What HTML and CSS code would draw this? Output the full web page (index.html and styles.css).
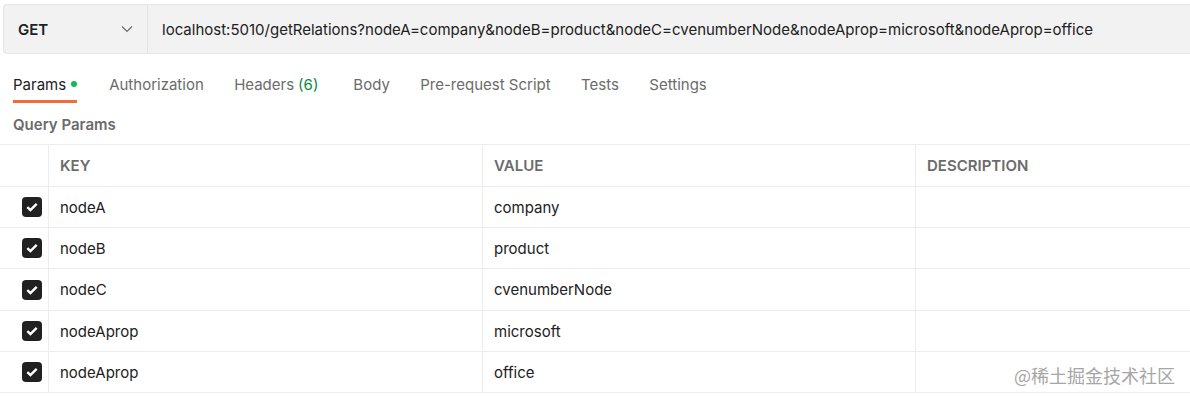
FILE: index.html
```html
<!DOCTYPE html>
<html>
<head>
<meta charset="utf-8">
<link rel="stylesheet" href="styles.css">
</head>
<body>
<div class="page">
  <div class="urlbar">
    <div class="method">
      <span class="method-name">GET</span>
      <svg class="chev" width="12" height="8" viewBox="0 0 12 8"><path d="M1 1.5 L6 6.5 L11 1.5" fill="none" stroke="#6b6b6b" stroke-width="1.2"/></svg>
    </div>
    <div class="url">localhost:5010/getRelations?nodeA=company&amp;nodeB=product&amp;nodeC=cvenumberNode&amp;nodeAprop=microsoft&amp;nodeAprop=office</div>
  </div>
  <div class="tabs">
    <div class="tab active">Params <span class="dot"></span></div>
    <div class="tab">Authorization</div>
    <div class="tab wide">Headers <span class="count">(6)</span></div>
    <div class="tab">Body</div>
    <div class="tab">Pre-request Script</div>
    <div class="tab">Tests</div>
    <div class="tab">Settings</div>
  </div>
  <div class="section-title">Query Params</div>
  <div class="table">
    <div class="row head">
      <div class="cell chk"></div>
      <div class="cell key">KEY</div>
      <div class="cell val">VALUE</div>
      <div class="cell desc">DESCRIPTION</div>
    </div>
    <div class="row">
      <div class="cell chk"><span class="box"><svg width="12" height="10" viewBox="0 0 12 10"><path d="M1.3 5.2 L4.4 8 L10.7 1.8" fill="none" stroke="#fff" stroke-width="2.4"/></svg></span></div>
      <div class="cell key">nodeA</div>
      <div class="cell val">company</div>
      <div class="cell desc"></div>
    </div>
    <div class="row">
      <div class="cell chk"><span class="box"><svg width="12" height="10" viewBox="0 0 12 10"><path d="M1.3 5.2 L4.4 8 L10.7 1.8" fill="none" stroke="#fff" stroke-width="2.4"/></svg></span></div>
      <div class="cell key">nodeB</div>
      <div class="cell val">product</div>
      <div class="cell desc"></div>
    </div>
    <div class="row">
      <div class="cell chk"><span class="box"><svg width="12" height="10" viewBox="0 0 12 10"><path d="M1.3 5.2 L4.4 8 L10.7 1.8" fill="none" stroke="#fff" stroke-width="2.4"/></svg></span></div>
      <div class="cell key">nodeC</div>
      <div class="cell val">cvenumberNode</div>
      <div class="cell desc"></div>
    </div>
    <div class="row">
      <div class="cell chk"><span class="box"><svg width="12" height="10" viewBox="0 0 12 10"><path d="M1.3 5.2 L4.4 8 L10.7 1.8" fill="none" stroke="#fff" stroke-width="2.4"/></svg></span></div>
      <div class="cell key">nodeAprop</div>
      <div class="cell val">microsoft</div>
      <div class="cell desc"></div>
    </div>
    <div class="row">
      <div class="cell chk"><span class="box"><svg width="12" height="10" viewBox="0 0 12 10"><path d="M1.3 5.2 L4.4 8 L10.7 1.8" fill="none" stroke="#fff" stroke-width="2.4"/></svg></span></div>
      <div class="cell key">nodeAprop</div>
      <div class="cell val">office</div>
      <div class="cell desc"></div>
    </div>
  </div>
  <div class="watermark">@稀土掘金技术社区</div>
</div>
</body>
</html>
```
FILE: styles.css
```css
* { box-sizing: border-box; }
html, body { margin: 0; padding: 0; background: #fff; }
body {
  font-family: Inter, "Noto Sans", "Noto Sans CJK SC", sans-serif;
  font-size: 15px;
  color: #212121;
  width: 1190px;
  height: 396px;
  overflow: hidden;
}
.page { position: relative; height: 396px; }

.urlbar {
  margin: 4px 0 0 3px;
  height: 50px;
  display: flex;
  background: #f2f2f2;
  border: 1px solid #e6e6e6;
  border-right: none;
  border-radius: 4px 0 0 4px;
}
.method {
  width: 144px;
  display: flex;
  align-items: center;
  justify-content: space-between;
  padding: 0 14px 0 14px;
  border-right: 1px solid #e3e3e3;
}
.method-name { font-weight: 600; color: #212121; }
.chev { display: block; }
.url {
  display: flex;
  align-items: center;
  padding-left: 14px;
  color: #212121;
  white-space: nowrap;
}

.tabs {
  display: flex;
  padding-left: 13px;
  height: 49px;
  align-items: stretch;
}
.tab {
  display: flex;
  align-items: center;
  color: #6b6b6b;
  margin-right: 30.4px;
  white-space: nowrap;
  border-bottom: 3px solid transparent;
  padding-top: 14px;
}
.tab.active { margin-right: 32px; }
.tab.wide { margin-right: 35px; }
.tab.active { color: #212121; border-bottom-color: #f26b3a; }
.dot {
  display: inline-block;
  width: 6px; height: 6px;
  border-radius: 50%;
  background: #0cbb52;
  margin-left: 5px;
}
.count { color: #0a8a3d; margin-left: 4px; }

.section-title {
  padding: 12px 0 0 13px;
  height: 41px;
  font-weight: 600;
  color: #6b6b6b;
}

.table { border-top: 1px solid #ededed; }
.row {
  display: grid;
  grid-template-columns: 48px 434px 433px 1fr;
  height: 41px;
  border-bottom: 1px solid #ededed;
}
.row.head { height: 42px; }
.row:nth-child(4) { height: 42px; }
.cell {
  display: flex;
  align-items: center;
  padding-left: 11px;
  border-left: 1px solid #ededed;
  white-space: nowrap;
}
.cell.chk { border-left: none; padding-left: 22px; }
.head .cell { font-weight: 600; color: #6b6b6b; }
.box {
  width: 20px; height: 20px;
  background: #212121;
  border-radius: 4px;
  display: flex;
  align-items: center;
  justify-content: center;
}
.box svg { display: block; }

.watermark {
  position: absolute;
  right: 15px;
  top: 359px;
  font-size: 18px;
  color: #a6a6a6;
  font-family: "Noto Sans CJK SC", sans-serif;
  line-height: 24px;
}
```
